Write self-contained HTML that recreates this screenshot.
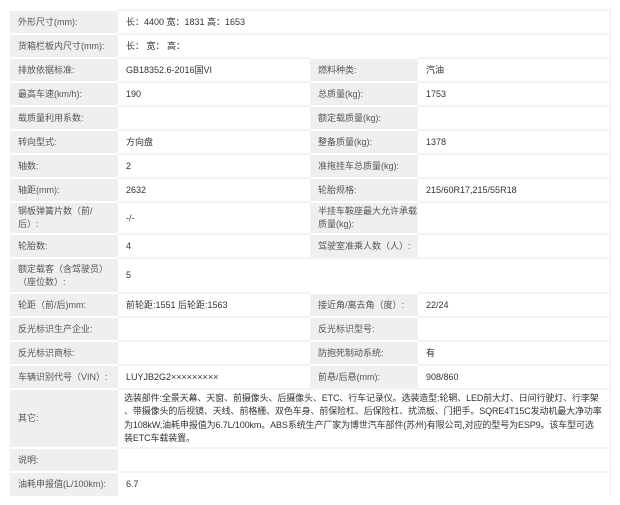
<!DOCTYPE html>
<html><head><meta charset="utf-8"><style>
body{margin:0;background:#fff;font-family:"Liberation Sans","Noto Sans CJK SC",sans-serif;font-size:9px;color:#444}
table{position:absolute;left:10px;top:9px;width:600px;border-collapse:collapse;table-layout:fixed;border-right:1px solid #eee}
td{padding:0 0 0 8px;vertical-align:middle;border-top:2px solid #f3f3f3;line-height:13px;background:#fff;color:#333}
td.l{background:#efefef;color:#555;border-top:2px solid #fff}
tr{height:24px}
</style></head><body>
<table>
<colgroup><col style="width:108px"><col style="width:192px"><col style="width:108px"><col style="width:192px"></colgroup>
<tr><td class="l">外形尺寸(mm):</td><td colspan="3">长：4400 宽：1831 高：1653</td></tr>
<tr><td class="l">货箱栏板内尺寸(mm):</td><td colspan="3">长： 宽： 高：</td></tr>
<tr><td class="l">排放依据标准:</td><td>GB18352.6-2016国VI</td><td class="l">燃料种类:</td><td>汽油</td></tr>
<tr><td class="l">最高车速(km/h):</td><td>190</td><td class="l">总质量(kg):</td><td>1753</td></tr>
<tr><td class="l">载质量利用系数:</td><td></td><td class="l">额定载质量(kg):</td><td></td></tr>
<tr><td class="l">转向型式:</td><td>方向盘</td><td class="l">整备质量(kg):</td><td>1378</td></tr>
<tr><td class="l">轴数:</td><td>2</td><td class="l">准拖挂车总质量(kg):</td><td></td></tr>
<tr><td class="l">轴距(mm):</td><td>2632</td><td class="l">轮胎规格:</td><td>215/60R17,215/55R18</td></tr>
<tr style="height:32px"><td class="l">钢板弹簧片数（前/<br>后）:</td><td>-/-</td><td class="l">半挂车鞍座最大允许承载<br>质量(kg):</td><td></td></tr>
<tr><td class="l">轮胎数:</td><td>4</td><td class="l">驾驶室准乘人数（人）:</td><td></td></tr>
<tr style="height:35px"><td class="l">额定载客（含驾驶员）<br>（座位数）:</td><td colspan="3">5</td></tr>
<tr><td class="l">轮距（前/后)mm:</td><td>前轮距:1551 后轮距:1563</td><td class="l">接近角/离去角（度）:</td><td>22/24</td></tr>
<tr><td class="l">反光标识生产企业:</td><td></td><td class="l">反光标识型号:</td><td></td></tr>
<tr><td class="l">反光标识商标:</td><td></td><td class="l">防抱死制动系统:</td><td>有</td></tr>
<tr><td class="l">车辆识别代号（VIN）:</td><td>LUYJB2G2×××××××××</td><td class="l">前悬/后悬(mm):</td><td>908/860</td></tr>
<tr style="height:59px"><td class="l">其它:</td><td colspan="3" style="padding-left:6px;padding-right:0;line-height:13.5px;letter-spacing:-0.12px">选装部件:全景天幕、天窗、前摄像头、后摄像头、ETC、行车记录仪。选装造型:轮辋、LED前大灯、日间行驶灯、行李架<br>、带摄像头的后视镜、天线、前格栅、双色车身、前保险杠、后保险杠、扰流板、门把手。SQRE4T15C发动机最大净功率<br>为108kW,油耗申报值为6.7L/100km。ABS系统生产厂家为博世汽车部件(苏州)有限公司,对应的型号为ESP9。该车型可选<br>装ETC车载装置。</td></tr>
<tr><td class="l">说明:</td><td colspan="3"></td></tr>
<tr><td class="l">油耗申报值(L/100km):</td><td colspan="3">6.7</td></tr>
</table>
</body></html>
